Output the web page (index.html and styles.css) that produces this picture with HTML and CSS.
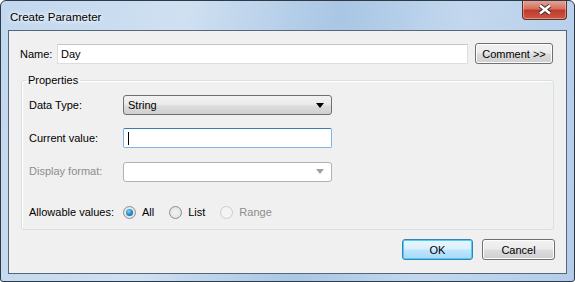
FILE: index.html
```html
<!DOCTYPE html>
<html>
<head>
<meta charset="utf-8">
<link rel="stylesheet" href="styles.css">
</head>
<body>
<div class="window">
  <div class="titlebar">
    <span class="title">Create Parameter</span>
    <span class="close"><svg width="14" height="11" viewBox="0 0 14 11"><path d="M2 1.5 L12 9.5 M12 1.5 L2 9.5" stroke="#3a2a2a" stroke-width="4.2" stroke-linecap="butt"/><path d="M2 1.5 L12 9.5 M12 1.5 L2 9.5" stroke="#fff" stroke-width="2.4"/></svg></span>
  </div>
  <div class="client">
    <div class="name-row">
      <span class="label">Name:</span>
      <div class="textbox name-box">Day</div>
      <div class="btn comment">Comment &gt;&gt;</div>
    </div>
    <fieldset class="group">
      <legend>Properties</legend>
      <div class="row">
        <span class="flabel">Data Type:</span>
        <div class="combo">String<span class="arrow"></span></div>
      </div>
      <div class="row">
        <span class="flabel">Current value:</span>
        <div class="textbox focus"><span class="caret"></span></div>
      </div>
      <div class="row">
        <span class="flabel dis">Display format:</span>
        <div class="combo disabled"><span class="arrow"></span></div>
      </div>
      <div class="row radios">
        <span class="flabel allow">Allowable values:</span>
        <span class="radio checked"></span><span class="rlabel">All</span>
        <span class="radio"></span><span class="rlabel">List</span>
        <span class="radio disabled"></span><span class="rlabel dis">Range</span>
      </div>
    </fieldset>
    <div class="buttons">
      <div class="btn ok">OK</div>
      <div class="btn cancel">Cancel</div>
    </div>
  </div>
</div>
</body>
</html>
```
FILE: styles.css
```css
html, body { margin: 0; padding: 0; background: #fff; }
body { font-family: "Liberation Sans", Arial, sans-serif; font-size: 11px; color: #000; }
.window {
  width: 575px; height: 282px; box-sizing: border-box;
  border: 1px solid #2f3a48; border-radius: 6px 6px 3px 3px;
  background: linear-gradient(100deg, #c2d8ee 0%, #cfe0f1 30%, #a9c6e4 55%, #c3d8ee 75%, #b3cde9 100%);
  display: flex; flex-direction: column; overflow: hidden;
}
.titlebar { height: 29px; display: flex; align-items: flex-start; position: relative; }
.title { margin: 9px 0 0 9px; font-size: 11.5px; color: #000; line-height: 14px; text-shadow: 0 0 6px #fff, 0 0 4px #fff; }
.close {
  margin-left: auto; margin-right: 7px; margin-top: -1px;
  width: 43px; height: 19px; border: 1px solid #6b2a24; border-top: none; border-radius: 0 0 4px 4px;
  background: linear-gradient(#e8a89a 0%, #d4715f 45%, #c0392b 55%, #c85a45 100%);
  display: flex; align-items: center; justify-content: center;
  box-shadow: inset 0 0 0 1px rgba(255,255,255,0.35);
}
.client {
  flex: 1; margin: 0 7px 7px 7px; border: 1px solid #56677b; background: #f0f0f0;
  padding: 12px 11px 0 11px; display: flex; flex-direction: column;
}
.name-row { display: flex; align-items: center; height: 21px; }
.label { width: 37px; }
.textbox {
  box-sizing: border-box; height: 20px; border: 1px solid #e2e3ea; border-top-color: #abadb3;
  background: #fff; padding: 0 3px; line-height: 18px; display: flex; align-items: center;
}
.name-box { width: 411px; border: 1px solid #dcdee4; border-top-color: #c4c6cc; }
.btn {
  box-sizing: border-box; height: 21px; border: 1px solid #707070; border-radius: 3px;
  background: linear-gradient(#f2f2f2 0%, #ebebeb 48%, #dddddd 52%, #cfcfcf 100%);
  display: flex; align-items: center; justify-content: center;
  box-shadow: inset 0 0 0 1px #fcfcfc;
}
.comment { width: 78px; margin-left: 7px; }
.group {
  margin: 9px 0 0 1px; width: 533px; box-sizing: border-box; height: 157px;
  border: 1px solid #d5dfe5; border-radius: 3px; padding: 8px 0 0 7px;
  box-shadow: inset 1px 1px 0 #fff;
}
.group legend { padding: 0 2px; margin-left: -3px; line-height: 14px; }
.row { display: flex; align-items: center; height: 20px; margin-bottom: 13px; }
.flabel { width: 94px; white-space: nowrap; }
.dis { color: #8d8d8d; }
.combo {
  box-sizing: border-box; width: 209px; height: 20px; border: 1px solid #707070; border-radius: 3px;
  background: linear-gradient(#f2f2f2 0%, #ebebeb 45%, #dddddd 55%, #cfcfcf 100%);
  padding: 0 4px; display: flex; align-items: center; position: relative;
}
.arrow {
  margin-left: auto; width: 0; height: 0; border-left: 4px solid transparent; border-right: 4px solid transparent;
  border-top: 5px solid #000; margin-right: 3px;
}
.combo.disabled { background: #fff; border-color: #adb2b5; margin-top: 1px; }
.combo.disabled .arrow { border-top-color: #a0a0a0; }
.textbox.focus { width: 209px; border: 1px solid #7eb4ea; border-top-color: #3d7bad; border-radius: 2px; }
.caret { width: 1px; height: 13px; background: #000; margin-left: 1px; }
.radios { margin-top: 21px; }
.radio {
  box-sizing: border-box; width: 13px; height: 13px; border-radius: 50%; border: 1px solid #8f8f8f;
  background: radial-gradient(circle at 50% 50%, #f4f4f4 0%, #dcdcdc 100%); margin-right: 6px;
  position: relative;
}
.radio.checked::after {
  content: ""; position: absolute; left: 2px; top: 2px; width: 7px; height: 7px; border-radius: 50%;
  background: radial-gradient(circle at 40% 35%, #6fd3ff 0%, #1c7fc0 60%, #0d4d82 100%);
}
.radio.disabled { border-color: #cbcbcb; background: #f4f4f4; }
.rlabel { margin-right: 15px; }
.buttons { display: flex; justify-content: flex-end; margin-top: 9px; padding-right: 0; }
.ok { width: 71px; border-color: #3c7fb1; box-shadow: inset 0 0 0 1px #48d0fc; background: linear-gradient(#eaf6fd 0%, #d9f0fc 48%, #bee6fd 52%, #a7d9f5 100%); }
.cancel { width: 73px; margin-left: 9px; }
```
